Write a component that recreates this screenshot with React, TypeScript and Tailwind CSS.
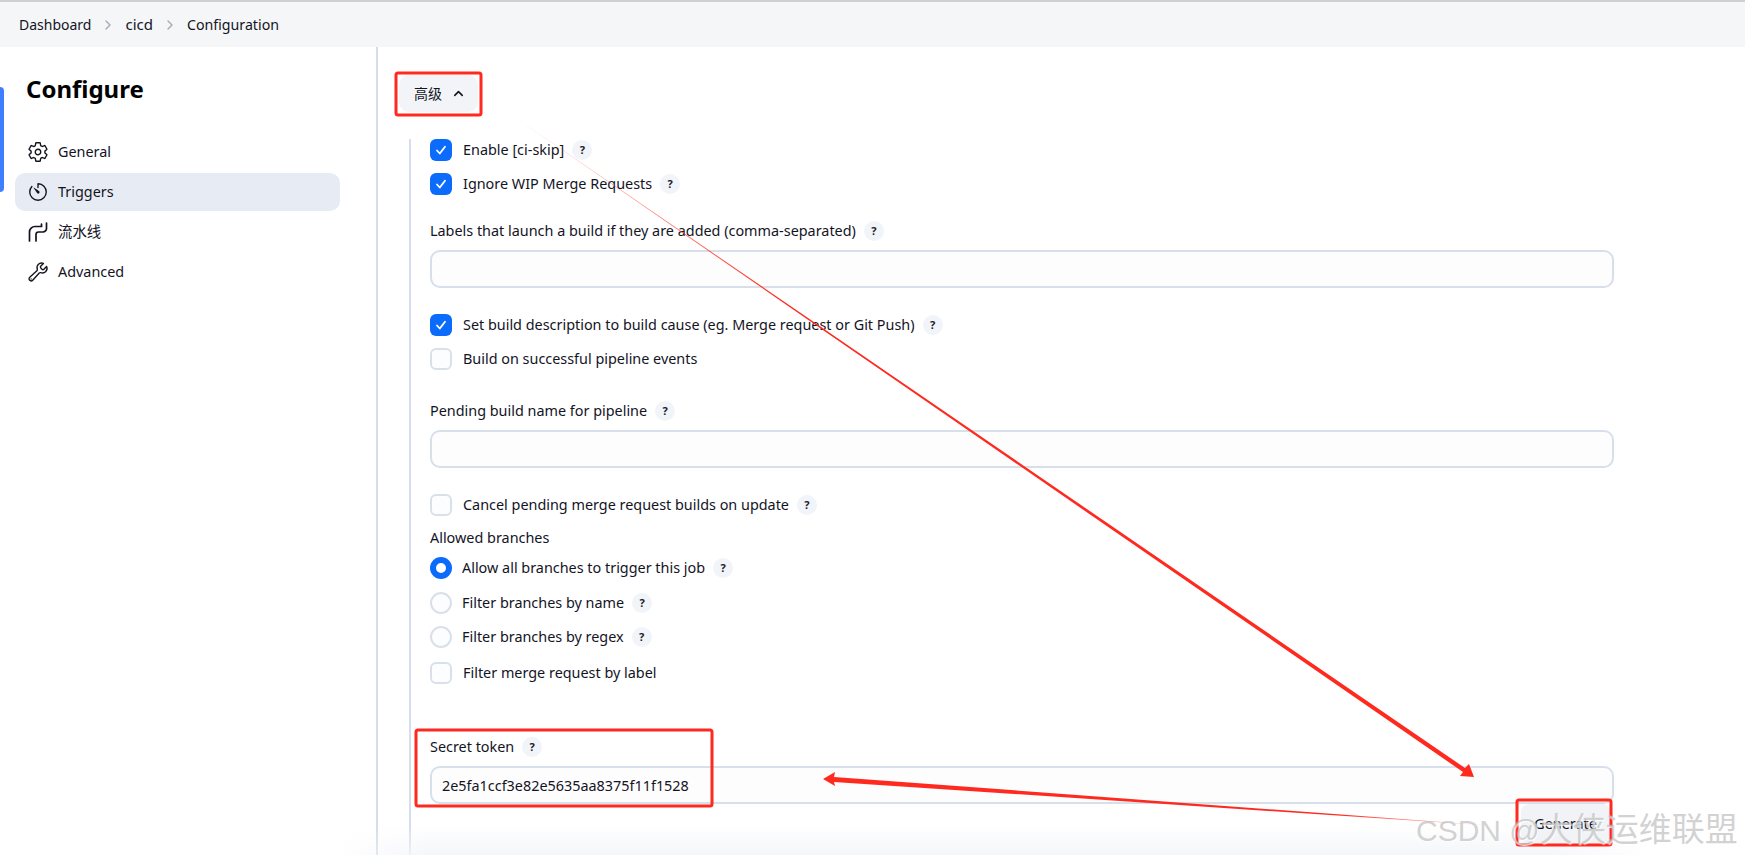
import { ChevronRight, ChevronUp } from 'lucide-react';
import { IoSettingsOutline, IoTimerOutline, IoBuildOutline } from 'react-icons/io5';

const font = '[font-family:"Noto_Sans","Noto_Sans_CJK_SC",sans-serif]';

function PipelineIcon() {
  return (
    <svg width="20" height="20" viewBox="0 0 20 20" fill="none" stroke="#14141f" strokeWidth="1.7" strokeLinecap="round">
      <path d="M18.5 1v5.5a3.5 3.5 0 0 1-3.5 3.5h-4.5a2.5 2.5 0 0 0-2.5 2.5V19" />
      <path d="M13.5 2v2.5H7A5.5 5.5 0 0 0 1.5 10v9" />
    </svg>
  );
}

function Help() {
  return (
    <span className="ml-[8px] flex h-[20px] w-[20px] shrink-0 items-center justify-center rounded-full bg-[#f1f4f8] text-[11px] font-bold text-[#20202a]">
      ?
    </span>
  );
}

function Checkbox({ checked, label, help }: { checked?: boolean; label: string; help?: boolean }) {
  return (
    <div className="flex h-[22px] items-center">
      {checked ? (
        <span className="flex h-[22px] w-[22px] shrink-0 items-center justify-center rounded-[6px] bg-[#0b6bfb]">
          <svg width="12" height="12" viewBox="0 0 12 12" fill="none" stroke="white" strokeWidth="1.8" strokeLinecap="round" strokeLinejoin="round">
            <path d="M2 6.5 4.8 9.5 10 2.8" />
          </svg>
        </span>
      ) : (
        <span className="h-[22px] w-[22px] shrink-0 rounded-[6px] border-2 border-[#d9e0ea] bg-[#fcfdfe]" />
      )}
      <span className="ml-[11px]">{label}</span>
      {help && <Help />}
    </div>
  );
}

function Radio({ checked, label }: { checked?: boolean; label: string }) {
  return (
    <div className="flex h-[22px] items-center">
      {checked ? (
        <span className="h-[22px] w-[22px] shrink-0 rounded-full border-[6px] border-[#0b6bfb] bg-white" />
      ) : (
        <span className="h-[22px] w-[22px] shrink-0 rounded-full border-2 border-[#d9e0ea] bg-[#fcfdfe]" />
      )}
      <span className="ml-[10px]">{label}</span>
      <Help />
    </div>
  );
}

function Label({ text, help = true }: { text: string; help?: boolean }) {
  return (
    <div className="flex h-[20px] items-center">
      <span>{text}</span>
      {help && <Help />}
    </div>
  );
}

function TextInput({ value }: { value?: string }) {
  return (
    <input
      readOnly
      defaultValue={value}
      className="mt-[9px] block h-[38px] w-full rounded-[10px] border-2 border-[#d7dfea] bg-[#fdfdfe] px-[10px] text-[#14141f] outline-none"
    />
  );
}

const navItems = [
  { label: 'General', icon: <IoSettingsOutline size={22} color="#14141f" /> },
  { label: 'Triggers', icon: <IoTimerOutline size={22} color="#14141f" />, active: true },
  { label: '流水线', icon: <PipelineIcon /> },
  { label: 'Advanced', icon: <IoBuildOutline size={22} color="#14141f" /> },
];

function Annotations() {
  return (
    <svg className="pointer-events-none absolute left-0 top-0 z-20" width="1745" height="861" fill="none">
      <defs>
        <linearGradient id="longArrow" gradientUnits="userSpaceOnUse" x1="497" y1="105" x2="1474" y2="777">
          <stop offset="0" stopColor="#ff2a1f" stopOpacity="0.15" />
          <stop offset="0.3" stopColor="#ff2a1f" />
        </linearGradient>
        <linearGradient id="backArrow" gradientUnits="userSpaceOnUse" x1="1510" y1="827" x2="823" y2="779">
          <stop offset="0" stopColor="#ff2a1f" stopOpacity="0" />
          <stop offset="0.25" stopColor="#ff2a1f" />
        </linearGradient>
      </defs>
      <rect x="396" y="73" width="85" height="42" rx="2" stroke="#ff2a1f" strokeWidth="3" />
      <rect x="416" y="730" width="296" height="76" rx="2" stroke="#ff2a1f" strokeWidth="3" />
      <rect x="1517" y="800" width="94" height="45" rx="2" stroke="#ff2a1f" strokeWidth="3" />
      <polygon points="497,105 1465,768 1469,764 1474,777 1460,776 1463,772" fill="url(#longArrow)" />
      <polygon points="823,779 835,772 834,777 1510,827 834,782 835,786" fill="url(#backArrow)" />
    </svg>
  );
}

export default function App() {
  return (
    <div className={`relative h-[861px] w-[1745px] overflow-hidden bg-white text-[14.4px] text-[#14141f] ${font}`}>
      {/* Breadcrumb */}
      <header className="flex h-[47px] items-center border-t-2 border-[#cfd0d2] bg-[#f4f6f8] pl-[19px] text-[14px]">
        <span>Dashboard</span>
        <ChevronRight size={16} color="#a4abb5" className="mx-[9px]" />
        <span className="text-[15px]">cicd</span>
        <ChevronRight size={16} color="#a4abb5" className="mx-[9px]" />
        <span className="text-[14.2px]">Configuration</span>
      </header>

      <div className="flex">
        {/* Sidebar */}
        <aside className="relative w-[376px] shrink-0 pt-[24px]">
          <div className="absolute left-0 top-[40px] h-[105px] w-[4px] rounded-r-[4px] bg-[#3f7fff]" />
          <h1 className="pl-[26px] text-[24px] font-bold leading-[36px] text-black">Configure</h1>
          <nav className="mt-[26px] flex flex-col gap-[2px] pl-[15px] pr-[36px]">
            {navItems.map((item) => (
              <div
                key={item.label}
                className={`flex h-[38px] items-center rounded-[10px] pl-[12px] ${item.active ? 'bg-[#e7ebf3]' : ''}`}
              >
                <span className="flex w-[22px] justify-center">{item.icon}</span>
                <span className="ml-[9px]">{item.label}</span>
              </div>
            ))}
          </nav>
        </aside>

        {/* Main */}
        <main className="h-[808px] w-[1251px] border-l-2 border-[#d5deea] pl-[21px] pt-[28px]">
          <button className="flex h-[37px] w-[79px] items-center rounded-[10px] bg-[#f2f4f8] pl-[15px] text-[14px]">
            高级
            <ChevronUp size={15} color="#14141f" strokeWidth={2.5} className="ml-[9px]" />
          </button>

          <section className="ml-[10px] mt-[27px] h-[716px] w-[1205px] border-l-2 border-[#d5deea] pl-[19px]">
            <Checkbox checked label="Enable [ci-skip]" help />
            <div className="mt-[12px]">
              <Checkbox checked label="Ignore WIP Merge Requests" help />
            </div>

            <div className="mt-[26px]">
              <Label text="Labels that launch a build if they are added (comma-separated)" />
              <TextInput />
            </div>

            <div className="mt-[26px]">
              <Checkbox checked label="Set build description to build cause (eg. Merge request or Git Push)" help />
            </div>
            <div className="mt-[12px]">
              <Checkbox label="Build on successful pipeline events" />
            </div>

            <div className="mt-[31px]">
              <Label text="Pending build name for pipeline" />
              <TextInput />
            </div>

            <div className="mt-[26px]">
              <Checkbox label="Cancel pending merge request builds on update" help />
            </div>
            <div className="mt-[12px]">
              <Label text="Allowed branches" help={false} />
            </div>
            <div className="mt-[9px]">
              <Radio checked label="Allow all branches to trigger this job" />
            </div>
            <div className="mt-[13px]">
              <Radio label="Filter branches by name" />
            </div>
            <div className="mt-[12px]">
              <Radio label="Filter branches by regex" />
            </div>
            <div className="mt-[14px]">
              <Checkbox label="Filter merge request by label" />
            </div>

            <div className="mt-[53px]">
              <Label text="Secret token" />
              <TextInput value="2e5fa1ccf3e82e5635aa8375f11f1528" />
            </div>
            <div className="flex justify-end pr-[4px]">
              <button className="relative z-10 h-[40px] w-[89px] rounded-[8px] bg-[#f1f3f7]">Generate</button>
            </div>
          </section>
        </main>
      </div>

      {/* Sticky bottom fade */}
      <div className="absolute left-[340px] top-[825px] h-[30px] w-[1310px] bg-gradient-to-b from-transparent to-[#f5f6fa] [mask-image:linear-gradient(to_right,transparent,black_7%,black_92%,transparent)]" />

      <Annotations />

      {/* Watermark */}
      <div className='absolute left-[1416px] top-[808px] z-30 whitespace-nowrap text-[30px] leading-[44px] text-[#b4b4b4]/60 [font-family:"Liberation_Sans","Noto_Sans_CJK_SC",sans-serif] [text-shadow:1px_1px_1px_rgba(255,255,255,0.8)]'>
        CSDN @<span className="text-[33px]">大侠运维联盟</span>
      </div>
    </div>
  );
}
